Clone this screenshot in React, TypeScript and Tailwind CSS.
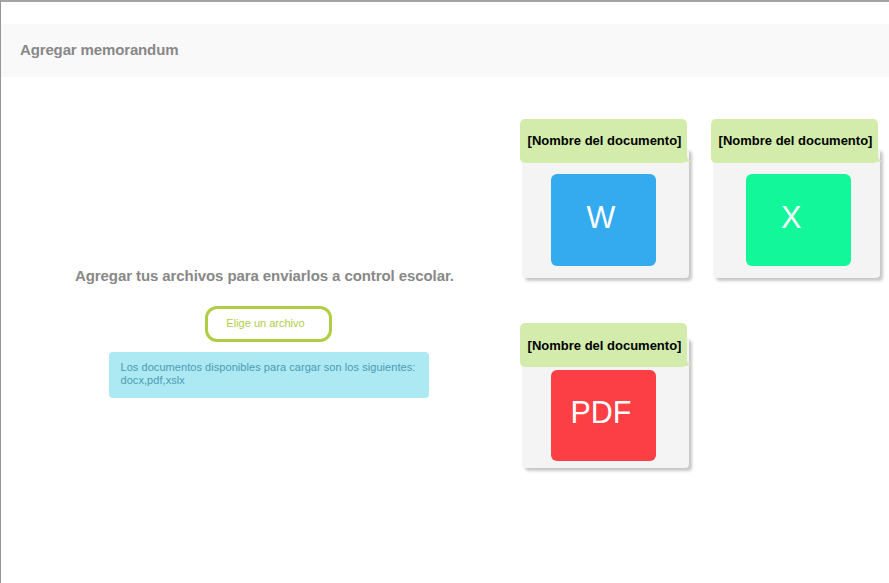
type CardProps = {
  label: string;
  title: string;
  body: string;
  tile: string;
  text: string;
};

function DocumentCard({ label, title, body, tile, text }: CardProps) {
  return (
    <article className="w-[170px]">
      <header className={`relative z-10 flex h-11 w-[167px] items-center justify-center rounded-[5px] bg-[#d3ecab] pl-[2px] ${title}`}>
        <h2 className="whitespace-nowrap text-[13px] font-bold leading-4 text-black">[Nombre del documento]</h2>
        <svg className="absolute -right-[4px] bottom-0 h-[7px] w-[12px]" viewBox="0 0 12 7" fill="#d3ecab">
          <path d="M1 0H8.2V2Q9.5 4 12 4.6Q11 6.1 7.5 6L3 5.5Z" />
        </svg>
      </header>
      <div className={`ml-[2px] w-[167px] rounded-[4px] bg-[#f4f4f4] shadow-[3px_3px_3px_#c8c8c8] ${body}`}>
        <div className={`w-[105px] rounded-[6px] text-[30.5px] leading-9 text-white ${tile}`}>
          <span className={`block ${text}`}>{label}</span>
        </div>
      </div>
    </article>
  );
}

export default function App() {
  return (
    <main
      className="h-[583px] w-full overflow-hidden border-l border-t-2 border-l-[#969696] border-t-[#a5a5a5] bg-white pt-[22px]"
      style={{ fontFamily: '"Liberation Sans", Arial, sans-serif' }}
    >
      <header className="flex h-[53px] items-center bg-[#f9f9f9] pl-[19px]">
        <h1 className="text-[15px] font-bold tracking-[-0.14px] text-[#888]">Agregar memorandum</h1>
      </header>
      <div className="flex">
        <section className="flex w-[519px] flex-col pt-[190px]">
          <h2 className="ml-[74px] whitespace-nowrap text-[15px] font-bold leading-[18px] tracking-[-0.085px] text-[#888]">
            Agregar tus archivos para enviarlos a control escolar.
          </h2>
          <button className="ml-[204px] mt-[21px] h-9 w-[127px] rounded-[12px] border-[3px] border-[#b0ce43] pb-[2px] pr-[6px] text-[11px] leading-4 text-[#b0ce43]">
            Elige un archivo
          </button>
          <p className="ml-[108px] mt-[10px] h-[46px] w-[320px] whitespace-nowrap rounded-[4px] bg-[#ade9f2] pl-[11.5px] pt-[9px] text-[11px] leading-[13px] tracking-[0.055px] text-[#4a9bb3]">
            Los documentos disponibles para cargar son los siguientes:
            <br />
            docx,pdf,xslx
          </p>
        </section>
        <section className="grid auto-rows-max grid-cols-2 gap-x-[21px] gap-y-[45px] pt-[42px]">
          <DocumentCard label="W" title="pt-0" body="-mt-[15px] h-[130px] pt-[26px]" tile="ml-[29px] h-[92px] bg-[#34aaef]" text="pl-[35.5px] pt-[25px]" />
          <DocumentCard label="X" title="pt-0" body="-mt-[15px] h-[130px] pt-[26px]" tile="ml-[32.5px] h-[92px] bg-[#11f799]" text="pl-[35.5px] pt-[25px]" />
          <DocumentCard label="PDF" title="pt-[2px]" body="-mt-[30px] h-[131px] pt-[32.5px]" tile="ml-[29px] h-[91.5px] bg-[#fc3e45]" text="pl-[19.5px] pt-[24.5px]" />
        </section>
      </div>
    </main>
  );
}
